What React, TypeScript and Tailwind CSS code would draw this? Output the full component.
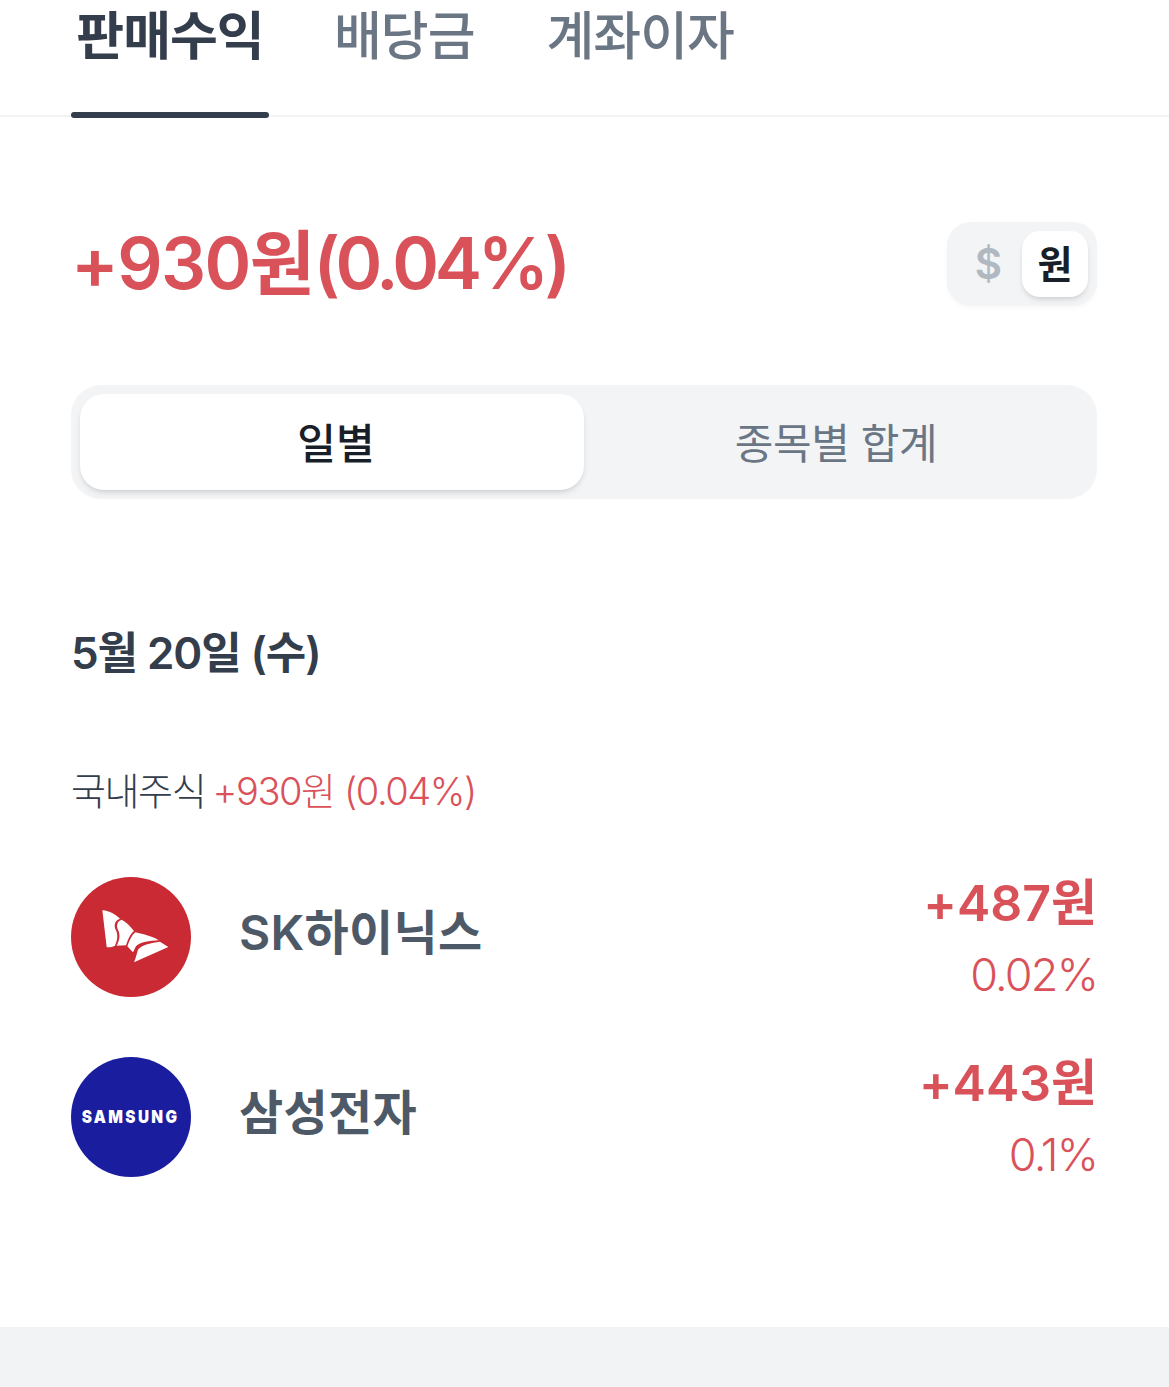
const font = "font-['Inter','Noto_Sans_CJK_KR',sans-serif]";
function Row({ name, amount, pct, logo }: { name: string; amount: string; pct: string; logo: React.ReactNode }) {
  return (
    <div className="flex items-center h-[120px]">
      {logo}
      <div className="ml-[48px] pb-[8px] text-[48px] font-semibold text-[#4e5968] tracking-[0.3px] leading-none flex-1">{name}</div>
      <div className="flex flex-col items-end pt-[3px]">
        <div className="text-[50px] font-semibold text-[#d9525a] leading-[60px]">{amount}</div>
        <div className="text-[45px] font-light text-[#d9525a] leading-[60px] mt-[12px] tracking-[-1.8px]">{pct}</div>
      </div>
    </div>
  );
}
export default function App() {
  return (
    <div className={`${font} w-[1169px] h-[1387px] bg-white overflow-hidden flex flex-col`}>
      <div className="h-[117px] border-b-2 border-[#f2f3f5] px-[71px] flex gap-[65px] relative">
        <div className="w-[198px] text-center text-[52px] font-bold text-[#333d4b] leading-[74px] tracking-[-1px]">판매수익</div>
        <div className="text-[52px] font-medium text-[#6b7684] leading-[74px] tracking-[-1px]">배당금</div>
        <div className="ml-[7px] text-[52px] font-medium text-[#6b7684] leading-[74px] tracking-[-1px]">계좌이자</div>
        <div className="absolute left-[71px] top-[112px] w-[198px] h-[6px] rounded-full bg-[#333d4b]"></div>
      </div>
      <div className="pl-[71px] pr-[72px] flex-1 flex flex-col">
        <div className="mt-[105px] flex items-center justify-between h-[84px]">
          <div className="text-[71px] font-semibold text-[#d9525a] leading-none -mt-[2px]"><span className="tracking-[-1.6px]">+930원</span><span className="tracking-[-4.4px]">(0.04%)</span></div>
          <div className="w-[150px] h-[84px] rounded-[24px] bg-[#f2f4f6] flex items-center justify-end pr-[9px] shadow-[0_2px_4px_rgba(0,0,0,0.03)]">
            <div className="flex-1 pl-[8px] text-center text-[42px] font-semibold text-[#b0b8c1] leading-none">$</div>
            <div className="w-[66px] h-[66px] rounded-[18px] bg-white shadow-md flex items-center justify-center text-[38px] font-bold text-[#191f28]">원</div>
          </div>
        </div>
        <div className="mt-[79px] h-[114px] rounded-[30px] bg-[#f2f4f6] p-[9px] flex">
          <div className="w-[504px] pt-[2px] pl-[8px] rounded-[24px] bg-white shadow-md flex items-center justify-center text-[42px] font-medium text-[#191f28]">일별</div>
          <div className="flex-1 pt-[2px] flex items-center justify-center text-[42px] text-[#6b7684] tracking-[-0.4px]">종목별 합계</div>
        </div>
        <div className="mt-[122px] text-[44px] font-semibold text-[#333d4b] tracking-[-1.1px] leading-[64px]">5월 20일 (수)</div>
        <div className="mt-[81px] text-[38px] font-light text-[#333d4b] tracking-[-1.4px] leading-[50px]">국내주식 <span className="text-[#d9525a] -ml-[2px]">+930원 (0.04%)</span></div>
        <div className="mt-[61px] flex flex-col gap-[60px]">
          <Row name="SK하이닉스" amount="+487원" pct="0.02%" logo={
            <div className="w-[120px] h-[120px] rounded-full bg-[#c92a33] shrink-0">
              <svg width="120" height="120" viewBox="33 20 360 360">
                <path fill="#fff" d="M127 120 C150 122 165 132 180 145 C165 150 160 165 168 180 C175 195 172 210 165 226 C155 230 148 232 140 230 Z" />
                <path fill="#fff" d="M185 148 C198 155 212 168 222 182 C210 192 205 205 198 225 L170 226 C178 210 182 195 174 178 C168 165 172 152 185 148 Z" />
                <path fill="#fff" d="M226 186 C250 192 278 198 296 210 C270 212 240 214 228 228 C222 238 222 245 218 245 L202 228 C208 210 215 195 226 186 Z" />
                <path fill="#fff" d="M300 214 L325 230 L222 276 C228 262 230 250 234 238 C245 222 275 218 300 214 Z" />
              </svg>
            </div>} />
          <Row name="삼성전자" amount="+443원" pct="0.1%" logo={
            <div className="w-[120px] h-[120px] rounded-full bg-[#1a1e9e] flex items-center justify-center shrink-0">
              <span className="inline-block scale-x-[0.85] text-white text-[18px] font-black tracking-[2.8px] leading-none">SAMSUNG</span>
            </div>} />
        </div>
      </div>
      <div className="h-[60px] bg-[#f2f3f5]"></div>
    </div>
  );
}
